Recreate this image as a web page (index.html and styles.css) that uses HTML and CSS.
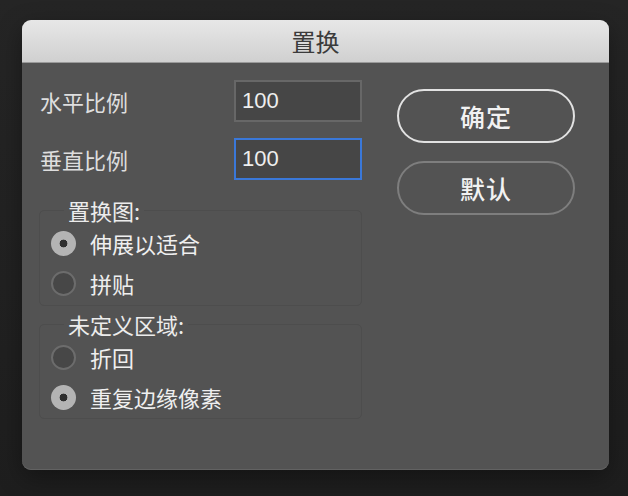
FILE: index.html
```html
<!DOCTYPE html>
<html lang="zh-CN">
<head>
<meta charset="utf-8">
<title>置换</title>
<link rel="stylesheet" href="styles.css">
</head>
<body>
<div class="dialog">
  <div class="titlebar">置换</div>
  <div class="content">
    <div class="left">
      <div class="field-row">
        <label class="field-label" for="h">水平比例</label>
        <input class="num" id="h" type="text" value="100">
      </div>
      <div class="field-row">
        <label class="field-label" for="v">垂直比例</label>
        <input class="num focused" id="v" type="text" value="100">
      </div>
      <fieldset class="group">
        <legend>置换图:</legend>
        <div class="radio-row"><span class="radio on"></span><span class="radio-text">伸展以适合</span></div>
        <div class="radio-row"><span class="radio"></span><span class="radio-text">拼贴</span></div>
      </fieldset>
      <fieldset class="group group2">
        <legend>未定义区域:</legend>
        <div class="radio-row"><span class="radio"></span><span class="radio-text">折回</span></div>
        <div class="radio-row"><span class="radio on"></span><span class="radio-text">重复边缘像素</span></div>
      </fieldset>
    </div>
    <div class="right">
      <button class="btn primary">确定</button>
      <button class="btn">默认</button>
    </div>
  </div>
</div>
</body>
</html>
```
FILE: styles.css
```css
html, body {
  margin: 0;
  padding: 0;
}
body {
  width: 628px;
  height: 496px;
  background: linear-gradient(#252525, #1e1e1e);
  font-family: "Noto Sans CJK SC", "Noto Sans", sans-serif;
  overflow: hidden;
}
.dialog {
  margin: 20px 0 0 22px;
  width: 587px;
  height: 450px;
  border-radius: 9px;
  overflow: hidden;
  background: #535353;
  box-shadow: 0 8px 24px rgba(0, 0, 0, 0.35), inset 0 -1px 0 #626262;
}
.titlebar {
  height: 42px;
  line-height: 42px;
  text-align: center;
  font-size: 24px;
  color: #3b3b3b;
  background: linear-gradient(#e7e7e7, #d0d0d0);
  border-bottom: 1px solid #9a9a9a;
}
.content {
  display: grid;
  grid-template-columns: 323px 178px;
  column-gap: 35px;
  padding: 17px 0 0 17px;
}
.left {
  display: flex;
  flex-direction: column;
}
.field-row {
  display: grid;
  grid-template-columns: 195px 128px;
  align-items: center;
  height: 42px;
  margin-bottom: 16px;
}
.field-row + .field-row {
  margin-bottom: 17px;
}
.field-label {
  padding-left: 1px;
  font-size: 22px;
  line-height: 26px;
  color: #dedede;
}
.num {
  box-sizing: border-box;
  width: 128px;
  height: 42px;
  margin: 0;
  padding: 0 6px;
  border: 2px solid #676767;
  background: #464646;
  color: #eeeeee;
  font-family: "Liberation Sans", "Noto Sans", sans-serif;
  font-size: 22px;
  outline: none;
}
.num.focused {
  border-color: #3a78d9;
}
.group {
  margin: 0;
  padding: 0 0 2px 11px;
  border: 1px solid #4d4d4d;
  border-radius: 5px;
  min-width: 0;
}
.group2 {
  margin-top: 5px;
  padding-bottom: 1px;
}
.group legend {
  margin-left: 13px;
  padding: 0 4px;
  font-size: 22px;
  line-height: 26px;
  color: #ececec;
}
.radio-row {
  display: flex;
  align-items: center;
  height: 40px;
}
.radio {
  box-sizing: border-box;
  width: 25px;
  height: 25px;
  border-radius: 50%;
  border: 2px solid #6c6c6c;
  background: #474747;
  margin-right: 14px;
  flex: none;
}
.radio.on {
  border: none;
  background: radial-gradient(circle, #2f2f2f 0 3.6px, #b4b4b4 4.2px);
}
.radio-text {
  font-size: 22px;
  line-height: 26px;
  color: #efefef;
}
.right {
  display: flex;
  flex-direction: column;
  gap: 18px;
  padding-top: 9px;
}
.btn {
  box-sizing: border-box;
  width: 178px;
  height: 54px;
  margin: 0;
  padding: 0;
  border-radius: 27px;
  border: 2px solid #7e7e7e;
  background: transparent;
  color: #f2f2f2;
  font-family: "Noto Sans CJK SC", "Noto Sans", sans-serif;
  font-size: 25px;
  font-weight: 500;
  letter-spacing: 1px;
}
.btn.primary {
  border-color: #e2e2e2;
}
```
